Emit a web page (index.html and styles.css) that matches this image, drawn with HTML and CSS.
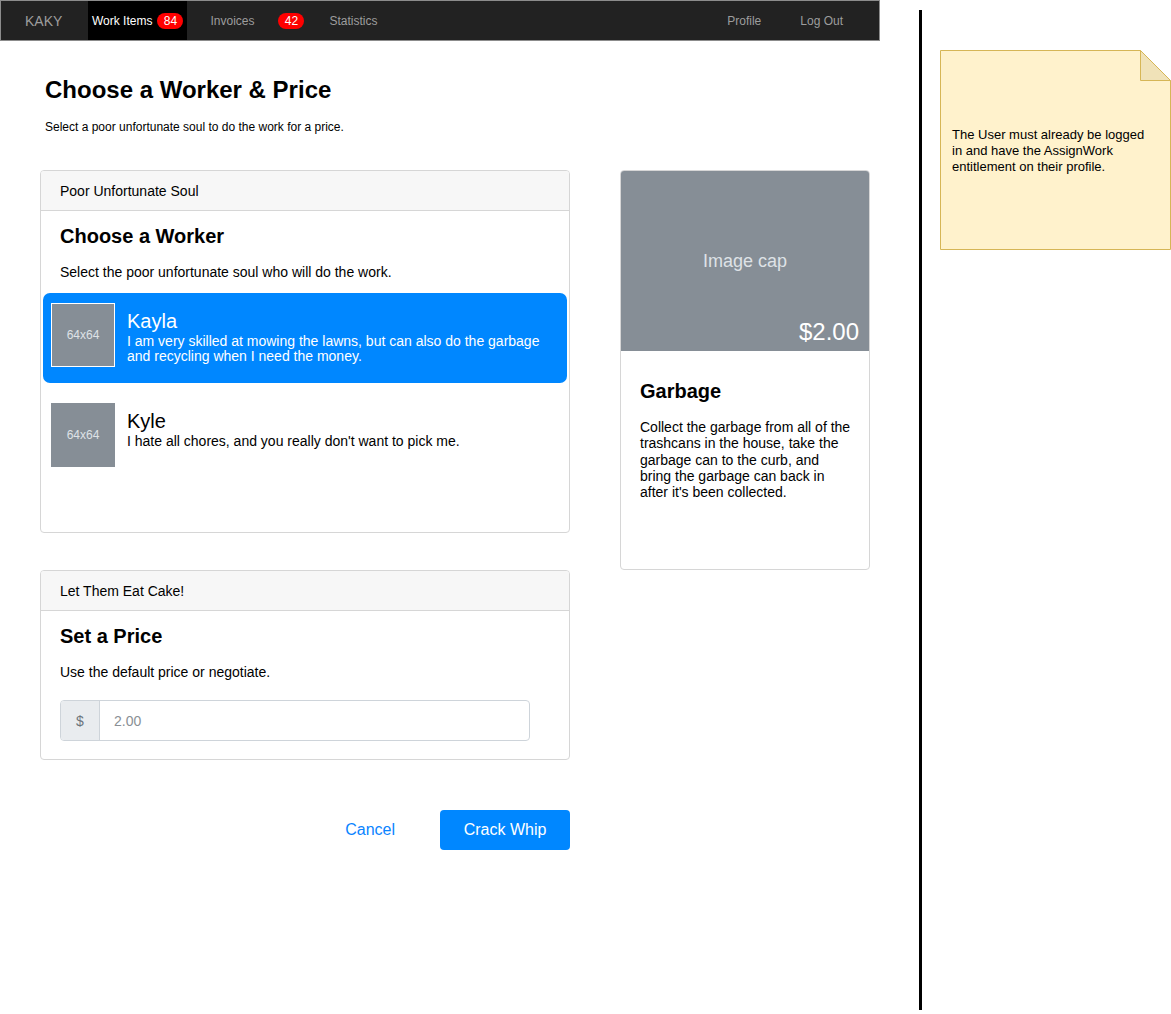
FILE: index.html
```html
<!DOCTYPE html>
<html>
<head>
<meta charset="utf-8">
<link rel="stylesheet" href="styles.css">
</head>
<body>
<div class="page">
  <div class="app">
    <nav class="navbar">
      <span class="brand">KAKY</span>
      <span class="nav-item active">Work Items <span class="badge">84</span></span>
      <span class="nav-item">Invoices</span>
      <span class="badge badge-gap">42</span>
      <span class="nav-item stats">Statistics</span>
      <span class="spacer"></span>
      <span class="nav-item">Profile</span>
      <span class="nav-item logout">Log Out</span>
    </nav>

    <header class="intro">
      <h1>Choose a Worker &amp; Price</h1>
      <p>Select a poor unfortunate soul to do the work for a price.</p>
    </header>

    <div class="grid">
      <div class="left">
        <section class="card worker-card">
          <div class="card-header">Poor Unfortunate Soul</div>
          <div class="card-body">
            <h3>Choose a Worker</h3>
            <p class="lead">Select the poor unfortunate soul who will do the work.</p>
          </div>
          <ul class="workers">
            <li class="worker selected">
              <div class="thumb">64x64</div>
              <div class="info">
                <div class="name">Kayla</div>
                <div class="desc">I am very skilled at mowing the lawns, but can also do the garbage and recycling when I need the money.</div>
              </div>
            </li>
            <li class="worker">
              <div class="thumb">64x64</div>
              <div class="info">
                <div class="name">Kyle</div>
                <div class="desc">I hate all chores, and you really don't want to pick me.</div>
              </div>
            </li>
          </ul>
        </section>

        <section class="card price-card">
          <div class="card-header">Let Them Eat Cake!</div>
          <div class="card-body">
            <h3>Set a Price</h3>
            <p class="lead">Use the default price or negotiate.</p>
            <div class="input-group">
              <span class="prefix">$</span>
              <span class="input">2.00</span>
            </div>
          </div>
        </section>

        <div class="actions">
          <span class="cancel">Cancel</span>
          <span class="btn-primary">Crack Whip</span>
        </div>
      </div>

      <div class="right">
        <section class="card chore-card">
          <div class="cap">
            <span class="cap-label">Image cap</span>
            <span class="cap-price">$2.00</span>
          </div>
          <div class="chore-body">
            <h3>Garbage</h3>
            <p>Collect the garbage from all of the trashcans in the house, take the garbage can to the curb, and bring the garbage can back in after it's been collected.</p>
          </div>
        </section>
      </div>
    </div>
  </div>

  <div class="divider"></div>

  <aside class="note">
    <svg class="note-shape" width="231" height="200" viewBox="0 0 231 200">
      <path d="M0.5 0.5 H200.5 L230.5 30.5 V199.5 H0.5 Z" fill="#fff2cc" stroke="#d6b656"/>
      <path d="M200.5 0.5 V30.5 H230.5 Z" fill="#f0e2b8" stroke="#d6b656"/>
    </svg>
    <p class="note-text">The User must already be logged in and have the AssignWork entitlement on their profile.</p>
  </aside>
</div>
</body>
</html>
```

FILE: styles.css
```css
* { box-sizing: border-box; }
html, body { margin: 0; padding: 0; background: #fff; }
body {
  font-family: "Liberation Sans", Arial, Helvetica, sans-serif;
  color: #000;
}
.page {
  display: flex;
  align-items: flex-start;
  width: 1171px;
  height: 1014px;
  overflow: hidden;
}
.app { width: 880px; flex: none; }

/* navbar */
.navbar {
  display: flex;
  align-items: stretch;
  height: 41px;
  background: #222;
  border: 1px solid #8c8c8c;
  font-size: 12px;
  color: #9d9d9d;
  white-space: nowrap;
}
.brand {
  display: flex;
  align-items: center;
  width: 87px;
  padding-left: 24px;
  font-size: 14px;
  color: #9d9d9d;
}
.nav-item {
  display: flex;
  align-items: center;
  margin-left: 23px;
}
.nav-item.active {
  margin-left: 0;
  background: #000;
  color: #fff;
  padding: 0 4px;
}
.badge {
  display: inline-flex;
  align-items: center;
  justify-content: center;
  height: 16px;
  min-width: 26px;
  padding: 0 5px;
  border-radius: 8px;
  background: #f00;
  color: #fff;
  font-size: 12px;
  margin-left: 5px;
}
.badge-gap { align-self: center; margin-left: 24px; }
.stats { margin-left: 25px; }
.spacer { flex: 1; }
.logout { margin-left: 39px; margin-right: 36px; }

/* intro */
.intro { padding: 34px 0 0 45px; height: 129px; }
.intro h1 {
  margin: 0;
  font-size: 24px;
  line-height: 29px;
  font-weight: bold;
}
.intro p {
  margin: 16px 0 0;
  font-size: 12px;
  line-height: 14px;
}

/* grid */
.grid {
  display: flex;
  padding-left: 40px;
  gap: 50px;
}
.left { width: 530px; }
.right { width: 250px; }

.card {
  border: 1px solid #d6d6d6;
  border-radius: 4px;
  background: #fff;
  overflow: hidden;
}
.card-header {
  height: 40px;
  background: #f7f7f7;
  border-bottom: 1px solid #d6d6d6;
  padding: 0 19px;
  font-size: 14px;
  display: flex;
  align-items: center;
}
.card-body { padding: 13px 19px 0; }
.card-body h3 {
  margin: 0;
  font-size: 20px;
  line-height: 24px;
  font-weight: bold;
}
.card-body .lead {
  margin: 16px 0 0;
  font-size: 14px;
  line-height: 17px;
}

.worker-card { height: 363px; }
.workers {
  list-style: none;
  margin: 12px 2px 0;
  padding: 0;
}
.worker {
  display: flex;
  align-items: flex-start;
  padding: 10px 8px;
  height: 90px;
  border-radius: 7px;
  margin-bottom: 10px;
}
.worker.selected { background: #0087ff; color: #fff; }
.thumb {
  width: 64px;
  height: 64px;
  flex: none;
  background: #868e96;
  border: 1px solid #868e96;
  color: #dee2e6;
  font-size: 12px;
  display: flex;
  align-items: center;
  justify-content: center;
}
.selected .thumb { border-color: #fff; }
.info { margin-left: 12px; padding-top: 7px; }
.name { font-size: 20px; line-height: 22px; }
.desc { font-size: 14px; line-height: 15px; margin-top: 2px; }

.price-card { margin-top: 37px; height: 190px; }
.input-group {
  display: flex;
  width: 470px;
  height: 41px;
  margin-top: 19px;
  border: 1px solid #ced4da;
  border-radius: 4px;
  overflow: hidden;
  font-size: 14px;
  color: #6c757d;
}
.prefix {
  width: 39px;
  background: #e9ecef;
  border-right: 1px solid #ced4da;
  display: flex;
  align-items: center;
  justify-content: center;
}
.input {
  display: flex;
  align-items: center;
  padding-left: 14px;
  color: #8a8f95;
}

.actions {
  display: flex;
  justify-content: flex-end;
  align-items: center;
  margin-top: 50px;
}
.cancel {
  color: #0a84ff;
  font-size: 16px;
  margin-right: 45px;
}
.btn-primary {
  width: 130px;
  height: 40px;
  border-radius: 4px;
  background: #0087ff;
  color: #fff;
  font-size: 16px;
  display: flex;
  align-items: center;
  justify-content: center;
}

/* chore card */
.chore-card { height: 400px; }
.cap {
  position: relative;
  height: 180px;
  background: #868e96;
  display: flex;
  align-items: center;
  justify-content: center;
}
.cap-label { color: #dee2e6; font-size: 18px; }
.cap-price {
  position: absolute;
  right: 10px;
  bottom: 5px;
  color: #fff;
  font-size: 24px;
  line-height: 28px;
}
.chore-body { padding: 28px 16px 0 19px; }
.chore-body h3 {
  margin: 0;
  font-size: 20px;
  line-height: 24px;
  font-weight: bold;
}
.chore-body p {
  margin: 16px 0 0;
  font-size: 14px;
  line-height: 16.25px;
}

/* divider and note */
.divider {
  flex: none;
  width: 3px;
  height: 1000px;
  margin: 10px 0 0 39px;
  background: #000;
}
.note {
  position: relative;
  flex: none;
  width: 231px;
  height: 200px;
  margin: 50px 0 0 18px;
  display: flex;
  align-items: center;
}
.note-shape { position: absolute; left: 0; top: 0; }
.note-text {
  position: relative;
  margin: 2px 0 0;
  padding: 0 24px 0 12px;
  font-size: 13px;
  line-height: 16px;
}
```
